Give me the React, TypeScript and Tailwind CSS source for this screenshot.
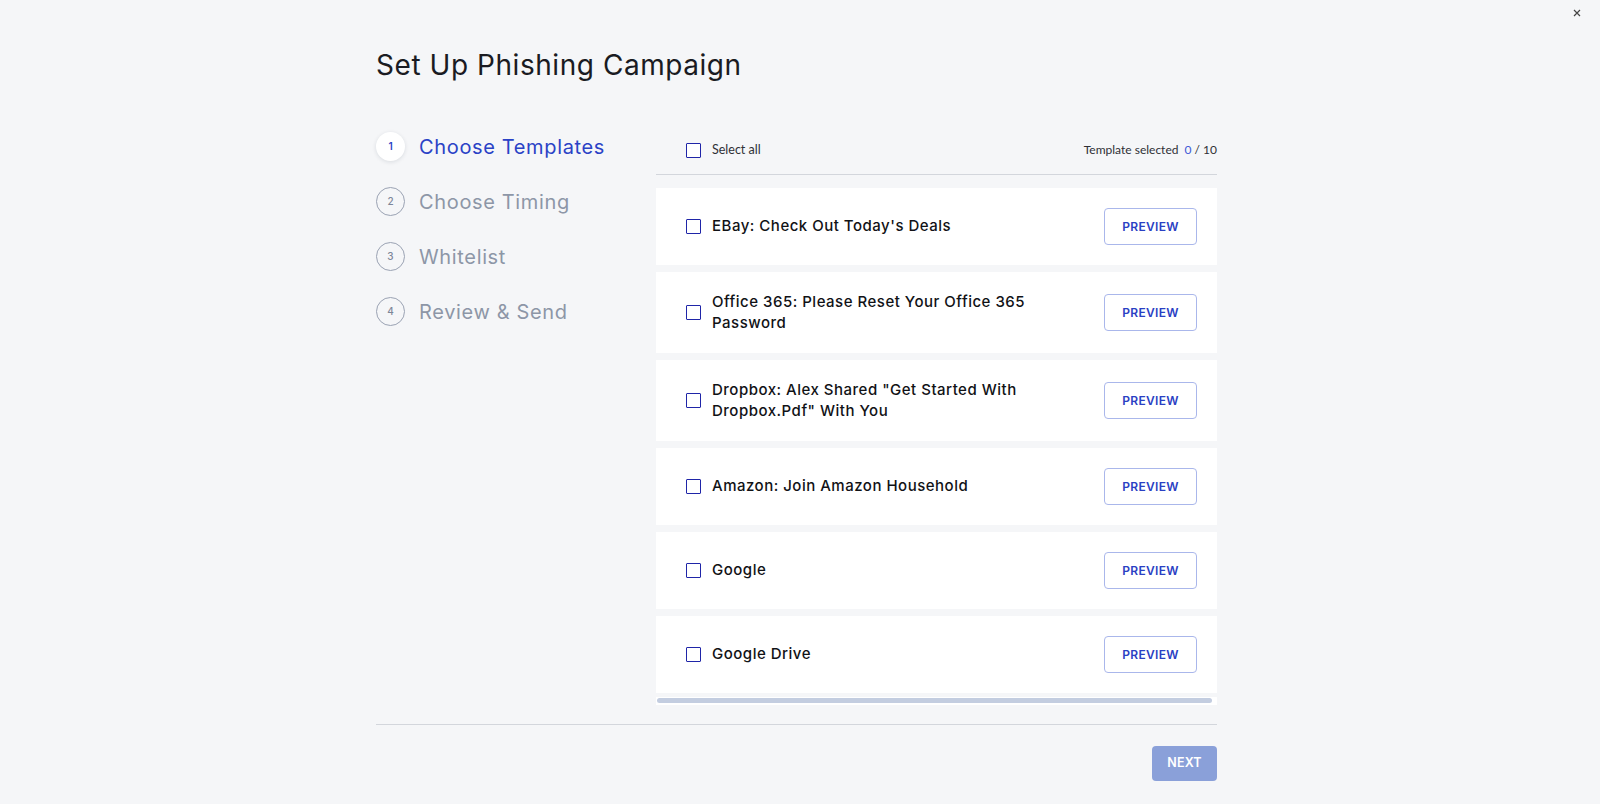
const templates = [
  "EBay: Check Out Today's Deals",
  "Office 365: Please Reset Your Office 365 Password",
  'Dropbox: Alex Shared "Get Started With Dropbox.Pdf" With You',
  "Amazon: Join Amazon Household",
  "Google",
  "Google Drive",
];

const steps = ["Choose Templates", "Choose Timing", "Whitelist", "Review & Send"];

function Checkbox() {
  return (
    <span className="block h-[15px] w-[15px] shrink-0 rounded-[1px] border-[1.5px] border-[#1f25a8] bg-white" />
  );
}

export default function App() {
  return (
    <main className="relative min-h-[804px] bg-[#f5f6f8] font-['Inter',sans-serif] text-[#16171c]">
      <button
        type="button"
        className="absolute right-[18px] top-[8px] flex h-[10px] w-[10px] items-center justify-center text-[#444]"
      >
        <svg width="8" height="8" viewBox="0 0 8 8" fill="none">
          <path d="M1 1L7 7M7 1L1 7" stroke="currentColor" strokeWidth="1.2" />
        </svg>
      </button>

      <div className="ml-[376px] w-[841px] pt-[47px]">
        <h1 className="h-[36px] text-[28px] leading-[36px] font-normal tracking-[0.55px] text-[#1a1b22]">
          Set Up Phishing Campaign
        </h1>

        <div className="mt-[49px] flex">
          {/* steps */}
          <div className="flex w-[280px] shrink-0 flex-col gap-[26px]">
            {steps.map((s, i) => (
              <div key={s} className="flex h-[29px] items-center">
                {i === 0 ? (
                  <span className="flex h-[29px] w-[29px] items-center justify-center rounded-full bg-white text-[10px] font-semibold text-[#2a42c6] shadow-[0_1px_4px_rgba(20,30,60,0.12)]">
                    1
                  </span>
                ) : (
                  <span className="flex h-[29px] w-[29px] items-center justify-center rounded-full border border-[#9aa2b3] text-[10px] font-medium text-[#7d8698]">
                    {i + 1}
                  </span>
                )}
                <span
                  className={
                    i === 0
                      ? "ml-[14px] text-[20px] tracking-[0.65px] text-[#2a42c6]"
                      : "ml-[14px] text-[20px] tracking-[0.65px] text-[#8d96a7]"
                  }
                >
                  {s}
                </span>
              </div>
            ))}
          </div>

          {/* template list */}
          <div className="flex-1">
            <div className="flex h-[36px] items-center justify-between pl-[30px] font-['Lato',sans-serif] text-[12.5px] text-[#2f3036]">
              <label className="flex items-center gap-[11px]">
                <Checkbox />
                <span>Select all</span>
              </label>
              <span className="text-[12px]">
                Template selected <span className="ml-[3px] text-[#3d5bd6]">0</span> / 10
              </span>
            </div>
            <div className="mt-[6px] h-px bg-[#d3d6dc]" />

            <div className="mt-[13px] flex flex-col gap-[7px]">
              {templates.map((t) => (
                <div
                  key={t}
                  className="flex items-center justify-between bg-white py-[20px] pl-[30px] pr-[20px]"
                >
                  <div className="flex items-center gap-[11px]">
                    <Checkbox />
                    <span className="max-w-[330px] text-[15px] leading-[20.5px] font-medium tracking-[0.5px] text-[#111216]">
                      {t}
                    </span>
                  </div>
                  <button
                    type="button"
                    className="h-[37px] w-[93px] rounded-[4px] border border-[#aab7eb] bg-white text-[12px] font-semibold tracking-[0.3px] text-[#2a40c3]"
                  >
                    PREVIEW
                  </button>
                </div>
              ))}
            </div>

            <div className="mt-[4px] h-[8px] bg-white pt-[1px] pl-[1px] pr-[5px]">
              <div className="h-[5px] rounded-full bg-[#c3cde0]" />
            </div>
          </div>
        </div>

        <div className="mt-[19px] h-px bg-[#d3d6dc]" />

        <div className="mt-[21px] flex justify-end">
          <button
            type="button"
            className="h-[35px] w-[65px] rounded-[4px] bg-[#8aa0d9] text-[12.5px] font-semibold tracking-[0.2px] text-white"
          >
            NEXT
          </button>
        </div>
      </div>
    </main>
  );
}
